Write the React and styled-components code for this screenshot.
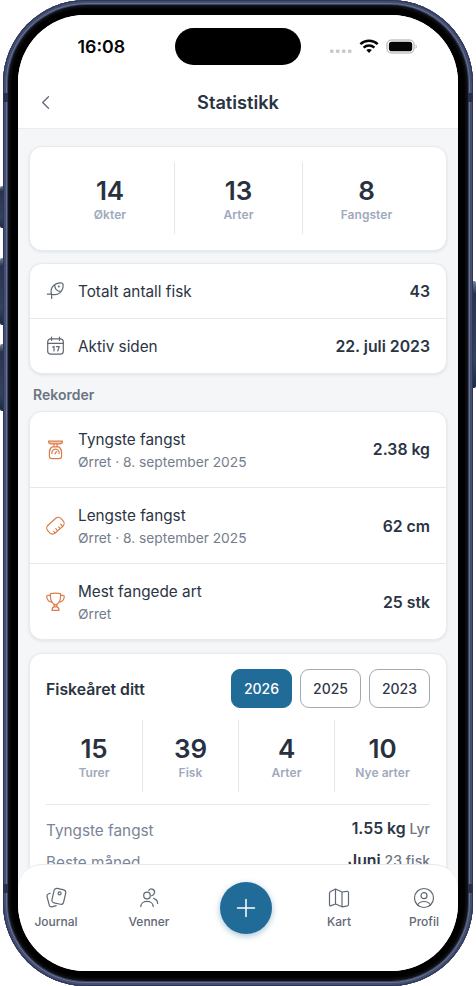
import React from "react";
import styled, { createGlobalStyle } from "styled-components";

const Global = createGlobalStyle`
  * { box-sizing: border-box; }
  body { margin: 0; background: #fff; font-family: Inter, sans-serif; color: #2b3443; }
`;

const Stage = styled.main`
  position: relative;
  width: 476px;
  height: 986px;
  padding: 0 3px;
  overflow: hidden;
`;

const SideButton = styled.i`
  position: absolute;
  width: 5px;
  ${(p) => p.$side}: 0;
  top: ${(p) => p.$top}px;
  height: ${(p) => p.$height}px;
  border-radius: 2px;
  background: linear-gradient(#77829c, #28344f 12%, #34415e 75%, #1c2940);
`;

const Body = styled.div`
  position: relative;
  width: 470px;
  height: 986px;
  padding: 15px;
  border-radius: 83px;
  background: #000;
  box-shadow: inset 0 0 0 1px #2e3654, inset 0 0 0 3px #434e73, inset 0 0 0 4px #68718f,
    inset 0 0 0 5px #3a4260, inset 0 0 3px 7px #15171d;
`;

const Antenna = styled.i`
  position: absolute;
  ${(p) => p.$side}: 0;
  top: ${(p) => p.$top}px;
  width: 5px;
  height: 9px;
  background: #292f49;
`;

const Screen = styled.div`
  height: 956px;
  display: flex;
  flex-direction: column;
  overflow: hidden;
  border-radius: 67px;
  background: #f4f6f8;
`;

const StatusBar = styled.div`
  flex: none;
  height: 63px;
  display: grid;
  grid-template-columns: 157px 126px 157px;
  background: #fff;
`;

const Clock = styled.time`
  padding: 21px 0 0 59.5px;
  font-size: 17.8px;
  line-height: 22px;
  font-weight: 600;
  color: #050505;
`;

const Island = styled.div`
  height: 37px;
  margin-top: 13px;
  border-radius: 19px;
  background: #000;
`;

const Signals = styled.div`
  padding: 22px 0 0 28px;
`;

const Header = styled.header`
  flex: none;
  height: 51px;
  display: grid;
  grid-template-columns: 60px 1fr 60px;
  align-items: center;
  background: #fff;
  border-bottom: 1px solid #e9ecf0;
`;

const Back = styled.button`
  display: flex;
  padding: 0 0 0 20px;
  border: 0;
  background: none;
`;

const Title = styled.h1`
  margin: 0;
  padding-bottom: 2px;
  text-align: center;
  font-size: 18.2px;
  line-height: 24px;
  font-weight: 600;
`;

const Content = styled.div`
  flex: 1;
  min-height: 0;
  overflow: hidden;
  padding: 17px 11px 0 11px;
`;

const Card = styled.section`
  margin-bottom: ${(p) => p.$gap || 12}px;
  border: 1px solid #e8ebee;
  border-radius: 13px;
  background: #fff;
  box-shadow: 0 1px 3px rgba(35, 50, 75, 0.1);
  padding: ${(p) => p.$pad || "0"};
`;

const Stats = styled.div`
  display: grid;
  grid-template-columns: repeat(${(p) => p.$cols}, 1fr);
  height: 72px;
`;

const Stat = styled.div`
  display: flex;
  flex-direction: column;
  align-items: center;
  padding-top: 12px;
  & + & { border-left: 1px solid #e3e6eb; }
`;

const Figure = styled.strong`
  font-size: 26px;
  line-height: 33px;
  font-weight: 600;
  letter-spacing: -0.1px;
  color: #28313f;
`;

const Label = styled.span`
  font-size: 12px;
  line-height: 15px;
  font-weight: 600;
  letter-spacing: 0.05px;
  color: #9fa9bc;
`;

const Row = styled.div`
  display: grid;
  grid-template-columns: 20px 1fr auto;
  column-gap: 12px;
  align-items: center;
  height: ${(p) => p.$height}px;
  padding: 0 16px;
  & + & { border-top: 1px solid #e5e8ec; }
`;

const Name = styled.div`
  padding-top: 2px;
  font-size: 15.3px;
  line-height: 22px;
`;

const Detail = styled.div`
  font-size: 13.75px;
  line-height: 22px;
  color: #747d8b;
`;

const Value = styled.div`
  padding-top: ${(p) => (p.$lowered ? 2 : 0)}px;
  font-size: 15.8px;
  line-height: 22px;
  font-weight: 600;
`;

const SectionTitle = styled.h2`
  margin: 0 0 7px 4px;
  font-size: 14px;
  line-height: 18px;
  font-weight: 600;
  color: #6a7482;
`;

const YearHead = styled.div`
  display: flex;
  align-items: center;
  gap: 8px;
  height: 39px;
  margin-bottom: 12px;
`;

const YearTitle = styled.h2`
  flex: 1;
  margin: 0;
  padding-top: 2px;
  font-size: 15.8px;
  font-weight: 600;
`;

const YearButton = styled.button`
  width: 61px;
  height: 39px;
  padding: 0;
  border: 1px solid ${(p) => (p.$active ? "#216b98" : "#a4a9b0")};
  border-radius: 9px;
  background: ${(p) => (p.$active ? "#216b98" : "#fff")};
  color: ${(p) => (p.$active ? "#fff" : "#303847")};
  font: 500 14px Inter, sans-serif;
`;

const Summary = styled.dl`
  margin: 12px 0 0;
  padding-top: 11px;
  border-top: 1px solid #e5e8ec;
`;

const SummaryLine = styled.div`
  display: flex;
  justify-content: space-between;
  height: 32px;
`;

const Term = styled.dt`
  padding-top: 4px;
  font-size: 15.3px;
  line-height: 22px;
  color: #7a8597;
`;

const Result = styled.dd`
  margin: 0;
  padding-top: 2px;
  font-size: 15.8px;
  line-height: 22px;
  font-weight: 600;
`;

const Extra = styled.span`
  font-size: 14px;
  font-weight: 500;
  color: #6c7582;
`;

const TabBar = styled.nav`
  position: relative;
  flex: none;
  height: 107px;
  margin-top: -24px;
  display: grid;
  grid-template-columns: 76px 110px 84px 102px 68px;
  border-top: 1px solid #e8eaee;
  border-radius: 24px 24px 0 0;
  background: #fff;
`;

const Tab = styled.a`
  display: flex;
  flex-direction: column;
  align-items: center;
  padding-top: 22px;
  font-size: 12px;
  line-height: 16px;
  font-weight: 500;
  color: #5f6875;
  svg { margin-bottom: 5px; }
`;

const AddButton = styled.button`
  justify-self: center;
  display: flex;
  align-items: center;
  justify-content: center;
  width: 52px;
  height: 52px;
  margin-top: 17px;
  padding: 0;
  border: 0;
  border-radius: 50%;
  background: #216b98;
  box-shadow: 0 2px 6px rgba(33, 107, 152, 0.4);
`;

const Line = styled.svg`
  display: block;
  fill: none;
  stroke: ${(p) => p.$color || "#606874"};
  stroke-width: ${(p) => p.$weight || 1.2};
  stroke-linecap: round;
  stroke-linejoin: round;
`;

const FishIcon = () => (
  <Line width="20" height="20" viewBox="0 0 20 20">
    <path d="M5.6 13.2C3.6 7.500 7.800 1.900 14.600 1.800q2.400 0 2.500 2C17.500 9.900 12.500 15.400 5.600 13.200ZM1.400 13.200h4.200v4.200M8.800 3.900c-.3 4 2 6.300 6.200 6.500" />
    <circle cx="12.800" cy="5.400" r=".4" />
  </Line>
);

const CalendarIcon = () => (
  <Line width="20" height="20" viewBox="0 0 20 20">
    <rect x="1.700" y="2.900" width="15.600" height="15.300" rx="3" />
    <path d="M1.700 7.400h15.600M5.500 1v3.300M13.500 1v3.300" />
    <path d="M6.800 11.100l1.200-.7v4.600M10.400 10.600h2.800l-1.500 4.400" />
  </Line>
);

const ScaleIcon = () => (
  <Line width="20" height="20" viewBox="0 0 20 20" $color="#db7d49">
    <path d="M2.500 1.200h14q-.2 2.700-2.500 2.700H5Q2.700 3.900 2.500 1.200Z" fill="#f4cdb7" />
    <path d="M8 3.900v2.900M11 3.900v2.900M6.400 6.800h6.200c2 1.200 3 3.300 3 5.500v4q0 2.400-2.400 2.400H5.800q-2.400 0-2.400-2.400v-4c0-2.200 1-4.300 3-5.500ZM5.900 13.700a3.700 3.700 0 1 1 7.200 0M9 13.900l1.400-2.300" />
  </Line>
);

const RulerIcon = () => (
  <Line width="20" height="20" viewBox="0 0 20 20" $color="#db7d49">
    <g transform="rotate(-42 9.500 9.800)">
      <rect x=".5" y="4.400" width="18" height="10.600" rx="3.800" />
      <path d="M4.500 14.700v-2M7.800 14.700v-2.600M11.100 14.700v-2M14.400 14.700v-2.600" />
    </g>
  </Line>
);

const TrophyIcon = () => (
  <Line width="20" height="20" viewBox="0 0 20 20" $color="#db7d49">
    <path d="M4.500 1.700q5-1.200 10 0c.5 5-.9 9.700-5 11.200C5.400 11.400 4 6.700 4.500 1.700ZM4.500 3.300H2.200Q.6 3.300.8 5c.2 2.600 1.900 4.500 4.800 5.100M14.500 3.300h2.300q1.600 0 1.400 1.700c-.2 2.600-1.900 4.500-4.800 5.100M7.900 12.300l.3 2.500h2.600l.3-2.500M8.200 14.800q-2.200.5-2.200 3.500h7q0-3-2.200-3.500" />
  </Line>
);

const JournalIcon = () => (
  <Line width="22" height="22" viewBox="0 0 22 22">
    <rect x="7.900" y="1.900" width="11.900" height="14.800" rx="2.700" transform="rotate(13 13.700 9.300)" />
    <circle cx="14.600" cy="6.400" r="1.500" />
    <path d="M5.200 6.300 3.300 7q-1.800.7-1.300 2.500l2.300 8.800q.6 2 2.600 1.500l4.300-1.100" />
  </Line>
);

const FriendsIcon = () => (
  <Line width="22" height="22" viewBox="0 0 22 22" $weight="1.250">
    <circle cx="9" cy="8.500" r="3.300" />
    <path d="M2.800 19.500C3.100 12.800 14.900 12.800 15.200 19.500M10.800 3.300c2.200-2.900 6.700-.5 5.600 2.900-.4 1.500-1.500 2.300-2.600 2.500M15.700 11.400c2.300.8 3.800 2.400 4 5" />
  </Line>
);

const MapIcon = () => (
  <Line width="22" height="22" viewBox="0 0 22 22">
    <path d="M7.500 2 3 4.200q-1.500.7-1.500 2v11.300q0 1.800 1.600 1.100L7.500 17l6.500 2.800 4.700-.6q1.800-.2 1.800-1.700V5.800q0-1.600-1.700-1.400L14 5ZM7.500 2v15M14 5v14.800" />
  </Line>
);

const ProfileIcon = () => (
  <Line width="22" height="22" viewBox="0 0 22 22">
    <circle cx="11" cy="11" r="9.500" />
    <circle cx="11" cy="8.700" r="3" />
    <path d="M4.600 18c2.300-4.700 10.500-4.700 12.800 0" />
  </Line>
);

const StatusIcons = () => (
  <svg width="90" height="20" viewBox="0 0 90 20">
    <g fill="#c9c9cb">
      <rect x="1" y="12.500" width="3.500" height="3.500" rx="1" />
      <rect x="7" y="12.500" width="3.500" height="3.500" rx="1" />
      <rect x="13" y="12.500" width="3.500" height="3.500" rx="1" />
      <rect x="19" y="12.500" width="3.500" height="3.500" rx="1" />
    </g>
    <g fill="none" stroke="#050505" strokeWidth="2.500">
      <path d="M31.400 7.200a12.700 12.700 0 0 1 17.300 0M34.600 10.600a8 8 0 0 1 10.800 0" />
      <path d="m37.300 13 2.750 3L42.800 13q-2.750-2.200-5.500 0Z" fill="#050505" stroke="none" />
    </g>
    <rect x="58" y="3" width="27" height="13" rx="4.200" fill="#fff" stroke="#a6a6a8" />
    <rect x="59.900" y="4.800" width="23.300" height="9.400" rx="2.800" fill="#050505" />
    <path d="M86.700 7.500q2 2 0 4.500Z" fill="#a6a6a8" />
  </svg>
);

const totals = [["14", "Økter"], ["13", "Arter"], ["8", "Fangster"]];
const yearTotals = [["15", "Turer"], ["39", "Fisk"], ["4", "Arter"], ["10", "Nye arter"]];
const records = [
  { Icon: ScaleIcon, name: "Tyngste fangst", detail: "Ørret · 8. september 2025", value: "2.38 kg", height: 75 },
  { Icon: RulerIcon, name: "Lengste fangst", detail: "Ørret · 8. september 2025", value: "62 cm", height: 76 },
  { Icon: TrophyIcon, name: "Mest fangede art", detail: "Ørret", value: "25 stk", height: 76 },
];

const StatGroup = ({ items }) => (
  <Stats $cols={items.length}>
    {items.map(([figure, label]) => (
      <Stat key={label}>
        <Figure>{figure}</Figure>
        <Label>{label}</Label>
      </Stat>
    ))}
  </Stats>
);

export default function App() {
  return (
    <>
      <Global />
      <Stage>
        <SideButton $side="left" $top={186} $height={42} />
        <SideButton $side="left" $top={258} $height={67} />
        <SideButton $side="left" $top={344} $height={67} />
        <SideButton $side="right" $top={281} $height={107} />
        <Body>
          <Antenna $side="left" $top={93} />
          <Antenna $side="right" $top={93} />
          <Antenna $side="left" $top={884} />
          <Antenna $side="right" $top={884} />
          <Screen>
            <StatusBar>
              <Clock>16:08</Clock>
              <Island />
              <Signals><StatusIcons /></Signals>
            </StatusBar>
            <Header>
              <Back aria-label="Tilbake">
                <Line width="14" height="16" viewBox="0 0 14 16" $weight="1.300"><path d="M10.500 1.800 4.700 7.500l5.800 5.700" /></Line>
              </Back>
              <Title>Statistikk</Title>
            </Header>
            <Content>
              <Card $pad="15px 16px 16px"><StatGroup items={totals} /></Card>
              <Card>
                <Row $height={54}><FishIcon /><Name>Totalt antall fisk</Name><Value $lowered>43</Value></Row>
                <Row $height={55}><CalendarIcon /><Name>Aktiv siden</Name><Value $lowered>22. juli 2023</Value></Row>
              </Card>
              <SectionTitle>Rekorder</SectionTitle>
              <Card $gap={13}>
                {records.map(({ Icon, name, detail, value, height }, i) => (
                  <Row key={name} $height={height}>
                    <Icon />
                    <div><Name>{name}</Name><Detail>{detail}</Detail></div>
                    <Value $lowered={i > 0}>{value}</Value>
                  </Row>
                ))}
              </Card>
              <Card $pad="15px 16px">
                <YearHead>
                  <YearTitle>Fiskeåret ditt</YearTitle>
                  <YearButton $active>2026</YearButton>
                  <YearButton>2025</YearButton>
                  <YearButton>2023</YearButton>
                </YearHead>
                <StatGroup items={yearTotals} />
                <Summary>
                  <SummaryLine><Term>Tyngste fangst</Term><Result>1.55 kg <Extra>Lyr</Extra></Result></SummaryLine>
                  <SummaryLine><Term>Beste måned</Term><Result>Juni <Extra>23 fisk</Extra></Result></SummaryLine>
                </Summary>
              </Card>
            </Content>
            <TabBar>
              <Tab><JournalIcon />Journal</Tab>
              <Tab><FriendsIcon />Venner</Tab>
              <AddButton aria-label="Ny fangst">
                <Line width="20" height="20" viewBox="0 0 20 20" $color="#fff" $weight="1.500"><path d="M10 1.500v17M1.500 10h17" /></Line>
              </AddButton>
              <Tab><MapIcon />Kart</Tab>
              <Tab><ProfileIcon />Profil</Tab>
            </TabBar>
          </Screen>
        </Body>
      </Stage>
    </>
  );
}
